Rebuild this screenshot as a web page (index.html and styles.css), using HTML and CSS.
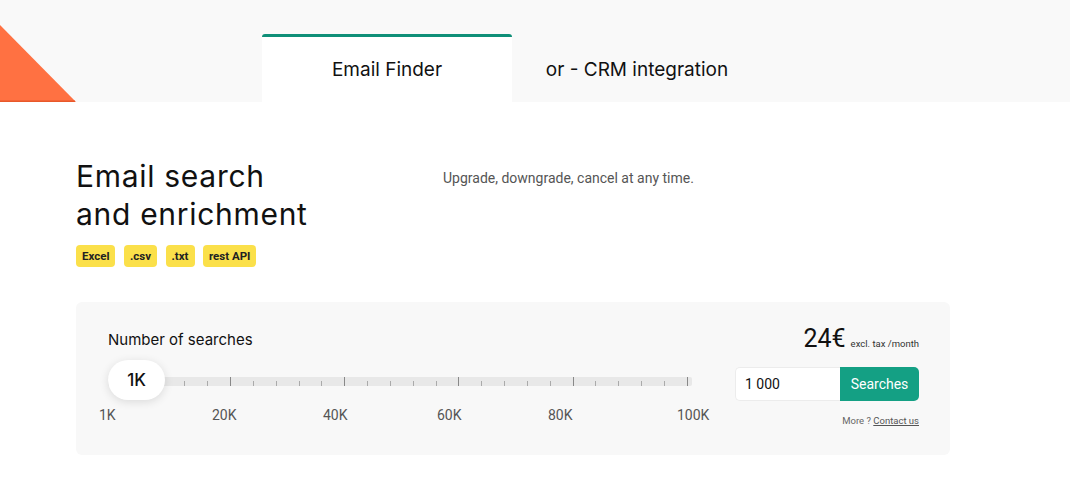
FILE: index.html
```html
<!DOCTYPE html>
<html lang="en">
<head>
<meta charset="UTF-8">
<meta name="viewport" content="width=device-width, initial-scale=1.0">
<title>Pricing - Email Finder</title>
<link rel="stylesheet" href="styles.css">
</head>
<body>

<div class="band">
  <svg class="corner" width="76" height="77" viewBox="0 0 76 77">
    <polygon points="0,0 76,77 0,77" fill="#ff7142"/>
    <rect x="0" y="75.5" width="75" height="1.5" fill="#e8582a"/>
  </svg>
  <div class="tabs">
    <div class="tab active">Email Finder</div>
    <div class="tab">or - CRM integration</div>
  </div>
</div>

<div class="main">
  <div class="intro">
    <div class="intro-left">
      <h1 class="title">Email search<br>and enrichment</h1>
      <div class="tags">
        <span class="tag">Excel</span>
        <span class="tag">.csv</span>
        <span class="tag">.txt</span>
        <span class="tag">rest API</span>
      </div>
    </div>
    <p class="intro-note">Upgrade, downgrade, cancel at any time.</p>
  </div>

  <div class="panel">
    <div class="slider-col">
      <div class="label">Number of searches</div>
      <div class="slider">
        <div class="track" id="track"></div>
        <div class="thumb">1K</div>
      </div>
      <div class="scale">
        <span>1K</span>
        <span>20K</span>
        <span>40K</span>
        <span>60K</span>
        <span>80K</span>
        <span>100K</span>
      </div>
    </div>

    <div class="order-col">
      <div class="price"><span class="amount">24€</span> <span class="per">excl. tax /month</span></div>
      <div class="order">
        <input class="qty" value="1 000">
        <button class="buy">Searches</button>
      </div>
      <div class="more">More ? <a href="#">Contact us</a></div>
    </div>
  </div>
</div>

<script>
// ticks on the slider track, a bigger one every 20K
var track = document.getElementById('track');
for (var i = 0; i <= 25; i++) {
  var tick = document.createElement('span');
  tick.className = i % 5 === 0 ? 'tick major' : 'tick';
  track.appendChild(tick);
}
</script>

</body>
</html>
```

FILE: styles.css
```css
body {
  margin: 0;
  font-family: Roboto, Arial, sans-serif;
  color: #222;
  background-color: #fff;
}
.band {
  height: 102px;
  background-color: #f9f9f9;
  display: flex;
  align-items: flex-end;
}
.corner {
  display: block;
  flex: none;
}
.tabs {
  display: flex;
  margin-left: 186px;
}
.tab {
  width: 250px;
  height: 65px;
  border-top: 3px solid transparent;
  border-radius: 3px 3px 0 0;
  display: flex;
  align-items: center;
  justify-content: center;
  font-family: Inter, sans-serif;
  font-size: 19px;
  color: #111;
  box-sizing: content-box;
}
.tab.active {
  background-color: #fff;
  border-top-color: #0f8f78;
}
.main {
  padding: 0 76px;
}
.intro {
  display: flex;
  padding-top: 55px;
}
.intro-left {
  width: 367px;
}
.title {
  margin: 0;
  font-family: Inter, sans-serif;
  font-weight: 400;
  font-size: 30px;
  line-height: 38px;
  color: #111;
  letter-spacing: 0.7px;
}
.tags {
  display: flex;
  gap: 8.5px;
  margin-top: 12px;
}
.tag {
  background-color: #fbe04a;
  border-radius: 4px;
  height: 22px;
  line-height: 22px;
  padding: 0 6px;
  font-size: 11.5px;
  font-weight: 700;
  color: #222;
}
.intro-note {
  margin: 13px 0 0;
  font-size: 14px;
  color: #555;
}
.panel {
  margin-top: 35px;
  width: 874px;
  box-sizing: border-box;
  background-color: #f8f8f8;
  border-radius: 6px;
  padding: 28px 31px 29px 32px;
  display: flex;
  justify-content: space-between;
}
.slider-col {
  width: 584px;
}
.label {
  font-family: Inter, sans-serif;
  font-size: 15px;
  line-height: 20px;
  color: #111;
}
.slider {
  position: relative;
  margin-top: 10px;
  height: 40px;
  display: flex;
  align-items: center;
}
.track {
  width: 100%;
  height: 9px;
  margin-top: 3px;
  background-color: #e8e8e8;
  border-radius: 2px;
  display: flex;
  justify-content: space-between;
  align-items: flex-end;
  padding: 0 4px 0 8px;
  box-sizing: border-box;
}
.tick {
  width: 1px;
  height: 5px;
  background-color: #aaa;
}
.tick.major {
  height: 9px;
  background-color: #888;
}
.thumb {
  position: absolute;
  left: 0;
  top: 0;
  width: 57px;
  height: 40px;
  border-radius: 20px;
  background-color: #fff;
  box-shadow: 0 2px 10px rgba(0, 0, 0, 0.12);
  display: flex;
  align-items: center;
  justify-content: center;
  font-family: Inter, sans-serif;
  font-size: 17px;
  font-weight: 500;
  color: #111;
}
.scale {
  display: grid;
  grid-template-columns: 113px 111px 114px 111px 129px auto;
  margin: 7px 0 0 -9px;
  font-size: 14px;
  line-height: 16px;
  color: #555;
}
.order-col {
  display: flex;
  flex-direction: column;
  align-items: flex-end;
}
.price {
  display: flex;
  align-items: baseline;
  gap: 5px;
  margin-top: -7px;
}
.amount {
  font-size: 25px;
  line-height: 32px;
  color: #111;
}
.per {
  font-size: 9.5px;
  color: #333;
}
.order {
  display: flex;
  margin-top: 12px;
}
.qty {
  width: 105px;
  height: 34px;
  box-sizing: border-box;
  border: 1px solid #ececec;
  border-right: none;
  border-radius: 5px 0 0 5px;
  padding: 0 9px;
  font-family: Roboto, sans-serif;
  font-size: 14px;
  color: #111;
  background-color: #fff;
}
.buy {
  width: 79px;
  height: 34px;
  border: none;
  border-radius: 0 5px 5px 0;
  background-color: #14a084;
  color: #fff;
  font-family: Roboto, sans-serif;
  font-size: 14px;
  cursor: pointer;
}
.more {
  margin-top: 14px;
  font-size: 9.5px;
  color: #666;
}
.more a {
  color: #555;
}
```
